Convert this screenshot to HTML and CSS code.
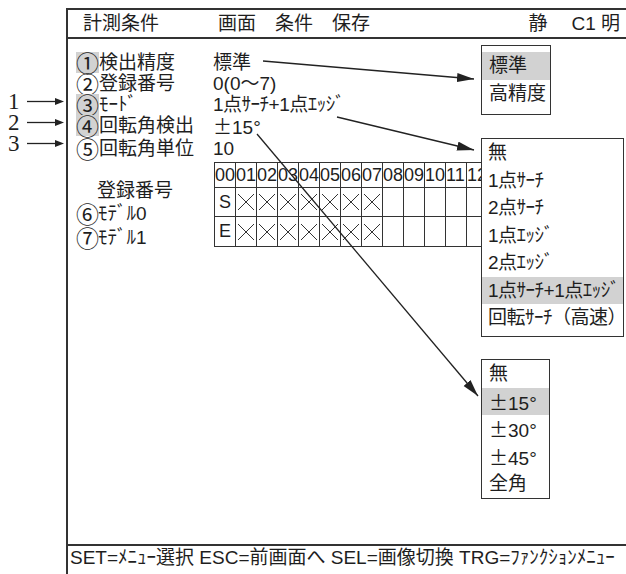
FILE: index.html
```html
<!DOCTYPE html>
<html>
<head>
  <meta charset="utf-8">
  <title>計測条件</title>
  <link rel="stylesheet" href="styles.css">
</head>
<body>
  <div class="page">

    <!-- callout numbers on the left margin -->
    <div class="gutter">
      <div class="callout">
        <span class="callout-no">1</span>
        <svg width="40" height="9" viewBox="0 0 40 9"><line x1="1" y1="4.5" x2="31" y2="4.5" stroke="#222" stroke-width="1.3"/><path d="M29 1 L38 4.5 L29 8 Z" fill="#222"/></svg>
      </div>
      <div class="callout">
        <span class="callout-no">2</span>
        <svg width="40" height="9" viewBox="0 0 40 9"><line x1="1" y1="4.5" x2="31" y2="4.5" stroke="#222" stroke-width="1.3"/><path d="M29 1 L38 4.5 L29 8 Z" fill="#222"/></svg>
      </div>
      <div class="callout">
        <span class="callout-no">3</span>
        <svg width="40" height="9" viewBox="0 0 40 9"><line x1="1" y1="4.5" x2="31" y2="4.5" stroke="#222" stroke-width="1.3"/><path d="M29 1 L38 4.5 L29 8 Z" fill="#222"/></svg>
      </div>
    </div>

    <div class="screen">
      <div class="titlebar">
        <span>計測条件</span>
        <span class="menu first">画面</span>
        <span class="menu">条件</span>
        <span class="menu">保存</span>
        <span class="status">静</span>
        <span class="camera">C1 明</span>
      </div>

      <div class="settings">
        <span><span class="num on">①</span>検出精度</span><span>標準</span>
        <span><span class="num">②</span>登録番号</span><span>0(0〜7)</span>
        <span><span class="num on">③</span>ﾓｰﾄﾞ</span><span class="tight">1点ｻｰﾁ+1点ｴｯｼﾞ</span>
        <span><span class="num on">④</span>回転角検出</span><span><span class="fw">±</span>15°</span>
        <span><span class="num">⑤</span>回転角単位</span><span>10</span>
      </div>

      <div class="models">
        <div class="model-labels">
          <div class="model-head">登録番号</div>
          <div><span class="num">⑥</span>ﾓﾃﾞﾙ0</div>
          <div><span class="num">⑦</span>ﾓﾃﾞﾙ1</div>
        </div>
        <div class="reg-table">
          <span>00</span><span>01</span><span>02</span><span>03</span><span>04</span><span>05</span><span>06</span><span>07</span>
          <span>08</span><span>09</span><span>10</span><span>11</span><span>12</span><span>13</span><span>14</span><span>15</span>
          <span class="mark">S</span><span class="x"></span><span class="x"></span><span class="x"></span><span class="x"></span><span class="x"></span><span class="x"></span><span class="x"></span>
          <span></span><span></span><span></span><span></span><span></span><span></span><span></span><span></span>
          <span class="mark">E</span><span class="x"></span><span class="x"></span><span class="x"></span><span class="x"></span><span class="x"></span><span class="x"></span><span class="x"></span>
          <span></span><span></span><span></span><span></span><span></span><span></span><span></span><span></span>
        </div>
      </div>

      <div class="footer">SET=ﾒﾆｭｰ選択 ESC=前画面へ SEL=画像切換 TRG=ﾌｧﾝｸｼｮﾝﾒﾆｭｰ</div>
    </div>

    <!-- drop-down choices -->
    <ul class="popup popup-precision">
      <li class="sel">標準</li>
      <li>高精度</li>
    </ul>

    <ul class="popup popup-mode">
      <li>無</li>
      <li>1点ｻｰﾁ</li>
      <li>2点ｻｰﾁ</li>
      <li>1点ｴｯｼﾞ</li>
      <li>2点ｴｯｼﾞ</li>
      <li class="sel">1点ｻｰﾁ+1点ｴｯｼﾞ</li>
      <li>回転ｻｰﾁ（高速）</li>
    </ul>

    <ul class="popup popup-angle">
      <li>無</li>
      <li class="sel"><span class="fw">±</span>15°</li>
      <li><span class="fw">±</span>30°</li>
      <li><span class="fw">±</span>45°</li>
      <li>全角</li>
    </ul>

    <!-- leader lines from values to their menus -->
    <svg class="leaders" width="626" height="574" viewBox="0 0 626 574">
      <defs>
        <marker id="head" markerUnits="userSpaceOnUse" markerWidth="18" markerHeight="10" refX="17" refY="4.5" orient="auto">
          <path d="M0 0 L17 4.5 L0 9 Z" fill="#222"/>
        </marker>
      </defs>
      <line x1="263" y1="61" x2="474" y2="79" stroke="#222" stroke-width="1.3" marker-end="url(#head)"/>
      <line x1="337" y1="117" x2="474" y2="150" stroke="#222" stroke-width="1.3" marker-end="url(#head)"/>
      <line x1="257" y1="134" x2="478" y2="396" stroke="#222" stroke-width="1.3" marker-end="url(#head)"/>
    </svg>
  </div>
</body>
</html>
```

FILE: styles.css
```css
* {
  box-sizing: border-box;
}

body {
  margin: 0;
  background: #fff;
  color: #1e1e1e;
  font-family: "Liberation Sans", "Noto Sans CJK JP", sans-serif;
  font-size: 19px;
}

.page {
  position: relative;
  display: flex;
  width: 626px;
  height: 574px;
  padding-top: 8px;
  overflow: hidden;
}

.fw {
  font-family: "Noto Sans CJK JP", sans-serif;
}

.tight {
  letter-spacing: -0.5px;
}

/* left margin callouts */
.gutter {
  flex: none;
  width: 66px;
  padding: 82.5px 0 0 8px;
}

.callout {
  display: flex;
  align-items: center;
  height: 21px;
}

.callout-no {
  width: 18px;
  font-family: "Liberation Serif", serif;
  font-size: 23px;
  line-height: 21px;
}

.callout svg {
  display: block;
}

/* monitor screen */
.screen {
  flex: 1;
  display: flex;
  flex-direction: column;
  border-left: 2px solid #333;
  border-top: 2px solid #333;
}

.titlebar {
  display: flex;
  height: 29px;
  padding: 0 6px 0 15px;
  line-height: 28px;
  border-bottom: 2px solid #333;
}

.menu {
  margin-left: 19px;
}

.menu.first {
  margin-left: 59px;
}

.status {
  margin-left: auto;
}

.camera {
  margin-left: 24px;
}

.settings {
  display: grid;
  grid-template-columns: 137px auto;
  padding: 12.5px 0 0 8px;
  line-height: 21px;
}

.num {
  display: inline-block;
  width: 23px;
  height: 21px;
  font-family: "Noto Sans CJK JP", sans-serif;
  font-size: 23px;
  line-height: 21px;
  text-align: center;
  vertical-align: top;
}

.num.on {
  background: #d2d2d2;
}

.models {
  display: flex;
  align-items: flex-start;
  margin-top: 3.5px;
  padding-left: 8px;
}

.model-labels {
  flex: none;
  width: 138px;
  padding-top: 16.5px;
  line-height: 23.5px;
}

.model-labels .num {
  width: 22px;
  height: 23.5px;
  line-height: 23.5px;
}

.model-head {
  padding-left: 21px;
}

.reg-table {
  display: grid;
  grid-template-columns: repeat(16, 20px);
  grid-template-rows: 24px 28px 29px;
  gap: 1px;
  padding: 1px;
  background: #333;
  font-size: 18px;
}

.reg-table span {
  background: #fff;
  line-height: 24px;
  white-space: nowrap;
}

.reg-table .mark {
  line-height: 28px;
  text-align: center;
}

/* thin cross drawn inside a cell */
.reg-table .x {
  background:
    linear-gradient(45deg, transparent calc(50% - 0.7px), #333 calc(50% - 0.7px), #333 calc(50% + 0.7px), transparent calc(50% + 0.7px)) center / 16px 16px no-repeat,
    linear-gradient(-45deg, transparent calc(50% - 0.7px), #333 calc(50% - 0.7px), #333 calc(50% + 0.7px), transparent calc(50% + 0.7px)) center / 16px 16px no-repeat,
    #fff;
}

.footer {
  margin-top: auto;
  height: 30px;
  padding: 2px 0 0 2px;
  border-top: 2px solid #333;
  line-height: 20px;
  white-space: nowrap;
}

/* drop-down menus */
.popup {
  position: absolute;
  left: 481px;
  margin: 0;
  padding: 0;
  list-style: none;
  background: #fff;
  border: 1px solid #333;
}

.popup li {
  height: 27.5px;
  padding-left: 7px;
  line-height: 27.5px;
  white-space: nowrap;
}

.popup li.sel {
  background: #d2d2d2;
}

.popup-precision {
  top: 45px;
  width: 70px;
  padding: 6px 0;
}

.popup-precision li {
  height: 28px;
  line-height: 28px;
}

.popup-mode {
  top: 138px;
  width: 143px;
  padding-bottom: 4px;
  letter-spacing: -0.5px;
}

.popup-mode li {
  padding-left: 6px;
}

.popup-angle {
  top: 359px;
  width: 69px;
}

.leaders {
  position: absolute;
  top: 0;
  left: 0;
  pointer-events: none;
}
```
